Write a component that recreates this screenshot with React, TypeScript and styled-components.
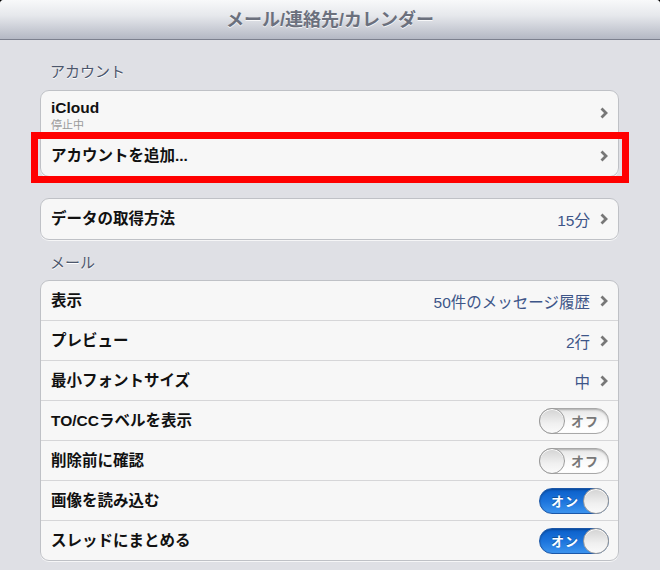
import React from 'react';
import styled, { createGlobalStyle } from 'styled-components';

const GlobalStyle = createGlobalStyle`
  html, body {
    margin: 0;
    padding: 0;
    background: #000;
  }
  body {
    font-family: "Liberation Sans", "Noto Sans CJK JP", sans-serif;
    -webkit-font-smoothing: antialiased;
  }
`;

const Screen = styled.div`
  min-height: 570px;
  background: #dfe0e5;
  border-radius: 4px 4px 0 0;
  overflow: hidden;
`;

const NavBar = styled.div`
  height: 39px;
  border-bottom: 1px solid #7c808e;
  background: linear-gradient(#f8f9fa 0%, #e6e8ec 40%, #b4b8c4 100%);
  display: flex;
  align-items: center;
  justify-content: center;
`;

const NavTitle = styled.div`
  font-size: 18px;
  font-weight: bold;
  color: #6b707d;
  text-shadow: 0 1px 0 rgba(255, 255, 255, 0.8);
  margin-top: -3px;
`;

const Content = styled.div`
  display: flex;
  flex-direction: column;
  padding: 0 41px 0 40px;
`;

const SectionLabel = styled.div<{ $top: number; $bottom: number }>`
  margin-top: ${(p) => p.$top}px;
  margin-bottom: ${(p) => p.$bottom}px;
  padding-left: 10px;
  font-size: 15px;
  line-height: 20px;
  color: #4c566c;
  text-shadow: 0 1px 0 #fff;
`;

const Group = styled.div<{ $top?: number }>`
  margin-top: ${(p) => p.$top ?? 0}px;
  background: #f7f7f7;
  border: 1px solid #bfc1c6;
  border-radius: 9px;
  box-shadow: 0 1px 0 rgba(255, 255, 255, 0.7);
`;

const Row = styled.div<{ $h: number }>`
  position: relative;
  height: ${(p) => p.$h}px;
  display: flex;
  align-items: center;
  padding: 0 10px;
  & + & {
    border-top: 1px solid #d6d6d8;
  }
`;

const RowText = styled.div<{ $shift?: number }>`
  flex: 1;
  display: flex;
  flex-direction: column;
  padding-top: ${(p) => p.$shift ?? 0}px;
`;

const Label = styled.div`
  font-size: 15.5px;
  font-weight: bold;
  color: #111;
  line-height: 18px;
`;

const SubLabel = styled.div`
  font-size: 11px;
  color: #9a9a9a;
  line-height: 13px;
  margin-top: 2px;
`;

const Value = styled.div`
  font-size: 15.5px;
  color: #3d5588;
  margin-right: 10px;
`;

const Highlight = styled.div`
  position: absolute;
  left: -10px;
  right: -11px;
  top: -4px;
  bottom: -7px;
  border: 7px solid #ff0000;
  pointer-events: none;
  z-index: 2;
`;

const Switch = styled.div<{ $on: boolean }>`
  position: relative;
  width: 70px;
  height: 26px;
  box-sizing: border-box;
  border-radius: 13px;
  border: 1px solid ${(p) => (p.$on ? '#1b57a8' : '#a8a8a8')};
  background: ${(p) =>
    p.$on
      ? 'linear-gradient(#0b5fc9 0%, #1c74dc 50%, #3c94ef 100%)'
      : 'linear-gradient(#e6e6e6 0%, #fbfbfb 55%, #ffffff 100%)'};
  box-shadow: inset 0 1px 2px rgba(0, 0, 0, 0.25);
  display: flex;
  align-items: center;
  margin-right: -1px;
`;

const SwitchText = styled.span<{ $on: boolean }>`
  font-size: 13px;
  font-weight: bold;
  letter-spacing: 1px;
  color: ${(p) => (p.$on ? '#fff' : '#777')};
  text-shadow: ${(p) => (p.$on ? '0 -1px 0 rgba(0,0,0,0.3)' : 'none')};
  margin-left: ${(p) => (p.$on ? 11 : 31)}px;
`;

const Knob = styled.div<{ $on: boolean }>`
  position: absolute;
  top: -1px;
  ${(p) => (p.$on ? 'right: -1px;' : 'left: -1px;')}
  width: 26px;
  height: 26px;
  box-sizing: border-box;
  border-radius: 50%;
  border: 1px solid #9b9b9b;
  background: linear-gradient(#d3d3d3 0%, #f0f0f0 60%, #fafafa 100%);
  box-shadow: inset 0 1px 0 #fff;
`;

function Chevron() {
  return (
    <svg width="8" height="12" viewBox="0 0 8 12">
      <path d="M1.5 1.5 L6 6 L1.5 10.5" fill="none" stroke="#777" strokeWidth="2.8" />
    </svg>
  );
}

function Toggle({ on }: { on: boolean }) {
  return (
    <Switch $on={on}>
      <SwitchText $on={on}>{on ? 'オン' : 'オフ'}</SwitchText>
      <Knob $on={on} />
    </Switch>
  );
}

const mailRows: { label: string; value?: string; toggle?: boolean }[] = [
  { label: '表示', value: '50件のメッセージ履歴' },
  { label: 'プレビュー', value: '2行' },
  { label: '最小フォントサイズ', value: '中' },
  { label: 'TO/CCラベルを表示', toggle: false },
  { label: '削除前に確認', toggle: false },
  { label: '画像を読み込む', toggle: true },
  { label: 'スレッドにまとめる', toggle: true },
];

export default function App() {
  return (
    <Screen>
      <GlobalStyle />
      <NavBar>
        <NavTitle>メール/連絡先/カレンダー</NavTitle>
      </NavBar>
      <Content>
        <SectionLabel $top={22} $bottom={8}>アカウント</SectionLabel>
        <Group>
          <Row $h={44}>
            <RowText $shift={5}>
              <Label>iCloud</Label>
              <SubLabel>停止中</SubLabel>
            </RowText>
            <Chevron />
          </Row>
          <Row $h={40}>
            <RowText>
              <Label>アカウントを追加...</Label>
            </RowText>
            <Chevron />
            <Highlight />
          </Row>
        </Group>

        <Group $top={21}>
          <Row $h={40}>
            <RowText>
              <Label>データの取得方法</Label>
            </RowText>
            <Value>15分</Value>
            <Chevron />
          </Row>
        </Group>

        <SectionLabel $top={13} $bottom={7}>メール</SectionLabel>
        <Group>
          {mailRows.map((r) => (
            <Row $h={39} key={r.label}>
              <RowText>
                <Label>{r.label}</Label>
              </RowText>
              {r.toggle === undefined ? (
                <>
                  <Value>{r.value}</Value>
                  <Chevron />
                </>
              ) : (
                <Toggle on={r.toggle} />
              )}
            </Row>
          ))}
        </Group>
      </Content>
    </Screen>
  );
}
